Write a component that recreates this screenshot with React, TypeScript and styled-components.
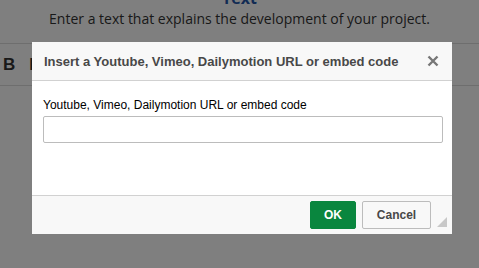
import styled, { createGlobalStyle } from 'styled-components'

const GlobalStyle = createGlobalStyle`
  html, body {
    margin: 0;
    padding: 0;
    background: #ffffff;
    overflow: hidden;
  }
`

const Page = styled.div`
  width: 479px;
  height: 268px;
  position: relative;
  overflow: hidden;
  font-family: 'Open Sans', sans-serif;
`

const Intro = styled.div`
  margin-top: -13px;
  text-align: center;
`

const SectionTitle = styled.h2`
  margin: 0;
  font-size: 16px;
  font-weight: 700;
  line-height: 22px;
  color: #2456a8;
`

const SectionHint = styled.p`
  margin: 0;
  font-size: 14px;
  line-height: 20px;
  color: #333333;
`

const Toolbar = styled.div`
  margin-top: 14px;
  height: 41px;
  border-top: 1px solid #dddddd;
  border-bottom: 1px solid #dddddd;
  display: flex;
  align-items: center;
  gap: 14px;
  padding: 0 3px;
  font-family: 'Liberation Sans', Arial, sans-serif;
`

const ToolButton = styled.span`
  font-size: 17px;
  font-weight: 700;
  color: #333333;
`

const Overlay = styled.div`
  position: absolute;
  inset: 0;
  background: rgba(0, 0, 0, 0.5);
  padding: 42px 0 0 32px;
`

const Dialog = styled.div`
  width: 420px;
  background: #ffffff;
  display: flex;
  flex-direction: column;
  font-family: 'Liberation Sans', Arial, sans-serif;
`

const DialogHeader = styled.div`
  height: 38px;
  display: flex;
  align-items: center;
  justify-content: space-between;
  padding: 0 13px 0 12px;
  background: #f8f8f8;
  border-bottom: 1px solid #d1d1d1;
`

const DialogTitle = styled.span`
  font-size: 13px;
  font-weight: 700;
  color: #484848;
`

const CloseButton = styled.span`
  display: flex;
  width: 12px;
  height: 12px;
`

const DialogBody = styled.div`
  height: 114px;
  padding: 17px 10px 0 11px;
  box-sizing: border-box;
  display: flex;
  flex-direction: column;
  gap: 4px;
`

const FieldLabel = styled.label`
  font-size: 12px;
  line-height: 14px;
  color: #000000;
`

const TextInput = styled.input`
  width: 400px;
  height: 27px;
  box-sizing: border-box;
  border: 1px solid #bcbcbc;
  border-radius: 2px;
  background: #ffffff;
  outline: none;
`

const DialogFooter = styled.div`
  height: 39px;
  box-sizing: border-box;
  background: #f8f8f8;
  border-top: 1px solid #d1d1d1;
  display: flex;
  align-items: center;
  justify-content: flex-end;
  gap: 6px;
  padding: 0 21px 0 0;
  position: relative;
`

const Button = styled.button<{ $primary?: boolean }>`
  height: 28px;
  box-sizing: border-box;
  padding: 0 ${(p) => (p.$primary ? '12px' : '13px')};
  border-radius: 2px;
  font-family: 'Liberation Sans', Arial, sans-serif;
  font-size: 12px;
  font-weight: 700;
  cursor: pointer;
  color: ${(p) => (p.$primary ? '#ffffff' : '#484848')};
  background: ${(p) => (p.$primary ? '#09863e' : '#f8f8f8')};
  border: 1px solid ${(p) => (p.$primary ? '#09863e' : '#bcbcbc')};
  min-width: ${(p) => (p.$primary ? '46px' : '69px')};
`

const ResizeGrip = styled.span`
  position: absolute;
  right: 5px;
  bottom: 7px;
  width: 0;
  height: 0;
  border-left: 10px solid transparent;
  border-bottom: 10px solid #c8c8c8;
`

const App: React.FC = () => {
  return (
    <>
      <GlobalStyle />
      <Page>
        <Intro>
          <SectionTitle>Text</SectionTitle>
          <SectionHint>Enter a text that explains the development of your project.</SectionHint>
        </Intro>
        <Toolbar>
          <ToolButton>B</ToolButton>
          <ToolButton>I</ToolButton>
        </Toolbar>

        <Overlay>
          <Dialog>
            <DialogHeader>
              <DialogTitle>Insert a Youtube, Vimeo, Dailymotion URL or embed code</DialogTitle>
              <CloseButton>
                <svg width="12" height="12" viewBox="0 0 12 12">
                  <path d="M1.5 1.5 L10.5 10.5 M10.5 1.5 L1.5 10.5" stroke="#777777" strokeWidth="2.4" />
                </svg>
              </CloseButton>
            </DialogHeader>
            <DialogBody>
              <FieldLabel>Youtube, Vimeo, Dailymotion URL or embed code</FieldLabel>
              <TextInput type="text" />
            </DialogBody>
            <DialogFooter>
              <Button $primary>OK</Button>
              <Button>Cancel</Button>
              <ResizeGrip />
            </DialogFooter>
          </Dialog>
        </Overlay>
      </Page>
    </>
  )
}

export default App
